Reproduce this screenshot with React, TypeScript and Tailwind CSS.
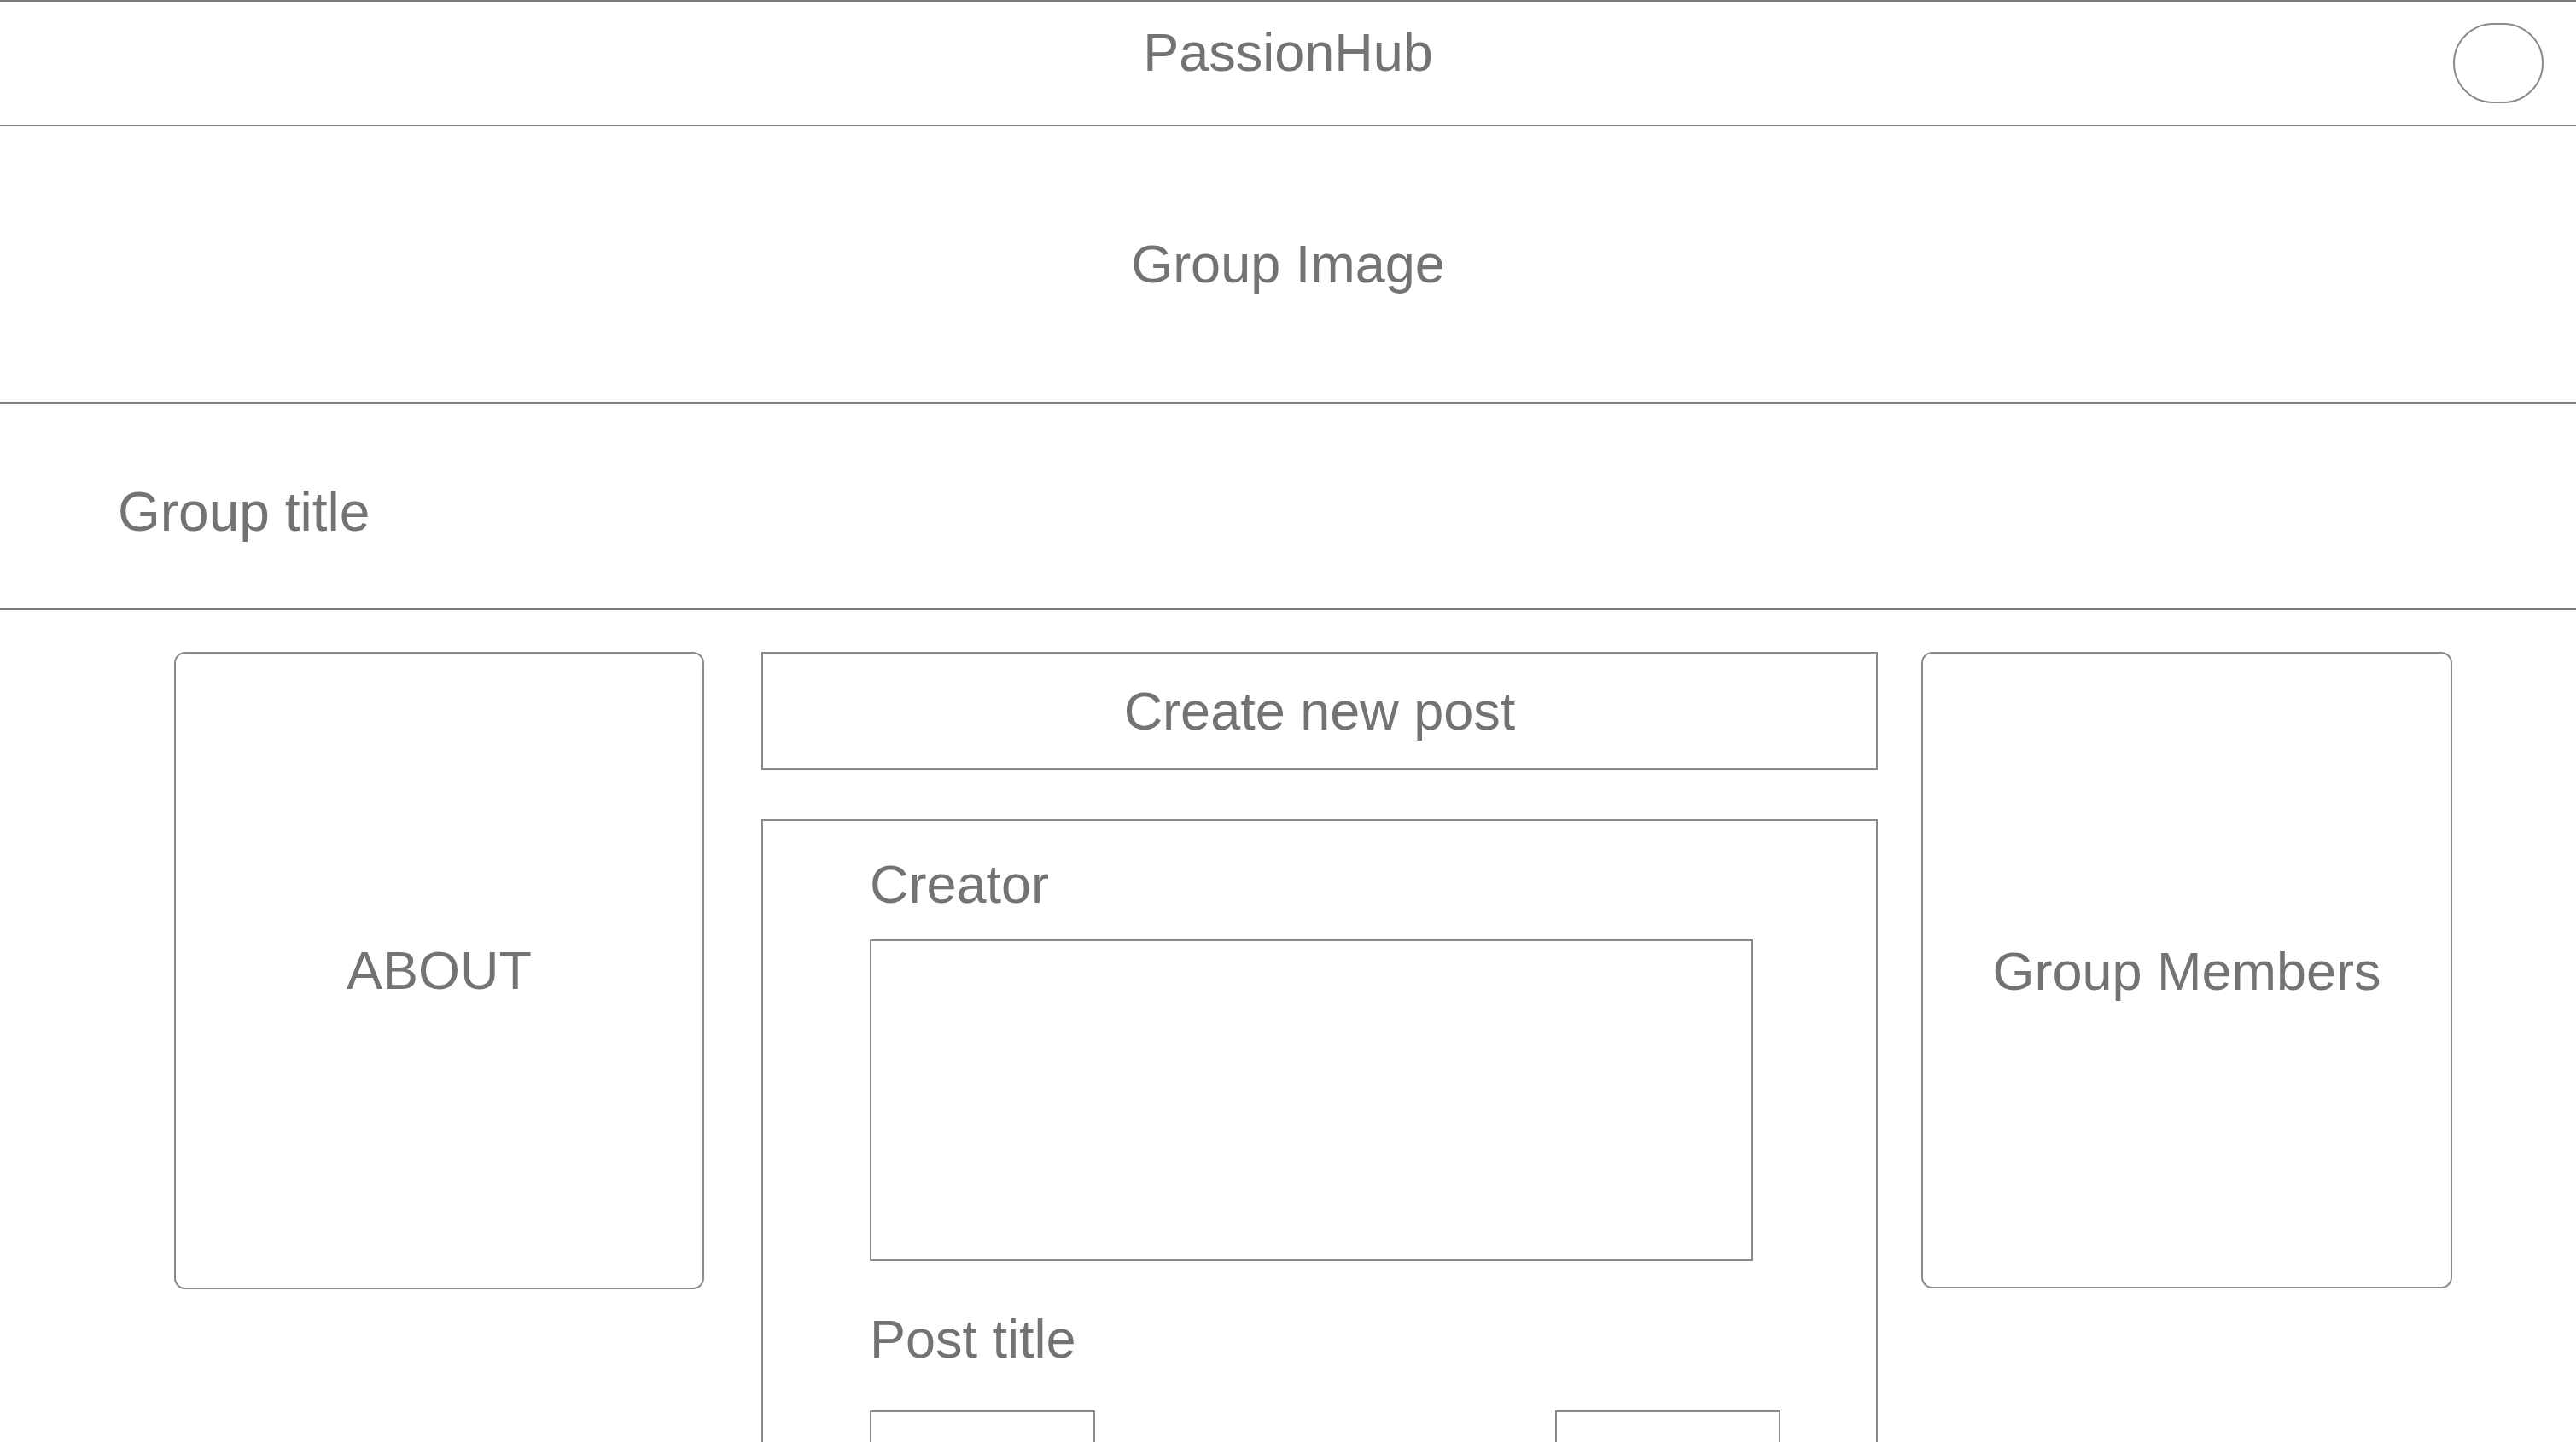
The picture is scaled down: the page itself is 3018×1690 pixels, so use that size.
import React from "react";

export default function App() {
  return (
    <div className="h-[1690px] overflow-hidden bg-white font-['Liberation_Sans',Arial,sans-serif] text-[#737373]">
      {/* top bar */}
      <header className="grid h-[148px] grid-cols-[1fr_auto_1fr] items-center border-y-2 border-[#7d7d7d]">
        <div />
        <h1 className="pb-[26px] text-[63px] leading-none">PassionHub</h1>
        <div className="flex justify-end pr-[38px]">
          <div className="h-[94px] w-[106px] rounded-full border-2 border-[#8a8a8a]" />
        </div>
      </header>

      {/* banner */}
      <section className="flex h-[325px] items-center justify-center border-b-2 border-[#7d7d7d]">
        <p className="text-[63px] leading-none">Group Image</p>
      </section>

      <section className="flex h-[242px] items-center border-b-2 border-[#7d7d7d] pl-[138px] pt-[13px]">
        <h2 className="text-[64px] leading-none">Group title</h2>
      </section>

      <main className="flex items-start pl-[204px] pt-[49px]">
        <div className="flex h-[747px] w-[621px] items-center justify-center rounded-[13px] border-2 border-[#8a8a8a]">
          <span className="text-[63px] leading-none">ABOUT</span>
        </div>

        <div className="ml-[67px] w-[1308px]">
          <button className="flex h-[138px] w-full items-center justify-center border-2 border-[#8a8a8a]">
            <span className="text-[63px] leading-none">Create new post</span>
          </button>

          <div className="mt-[58px] h-[800px] border-2 border-[#8a8a8a] pl-[125px] pt-[43px]">
            <p className="text-[63px] leading-none">Creator</p>
            <div className="mt-[33px] h-[377px] w-[1035px] border-2 border-[#8a8a8a]" />
            <p className="mt-[60px] text-[63px] leading-none">Post title</p>
            <div className="mt-[52px] flex gap-[539px]">
              <div className="h-[160px] w-[264px] border-2 border-[#8a8a8a]" />
              <div className="h-[160px] w-[264px] border-2 border-[#8a8a8a]" />
            </div>
          </div>
        </div>

        <div className="ml-[51px] flex h-[746px] w-[622px] items-center justify-center rounded-[13px] border-2 border-[#8a8a8a] pt-[3px]">
          <span className="text-[63px] leading-none">Group Members</span>
        </div>
      </main>
    </div>
  );
}
